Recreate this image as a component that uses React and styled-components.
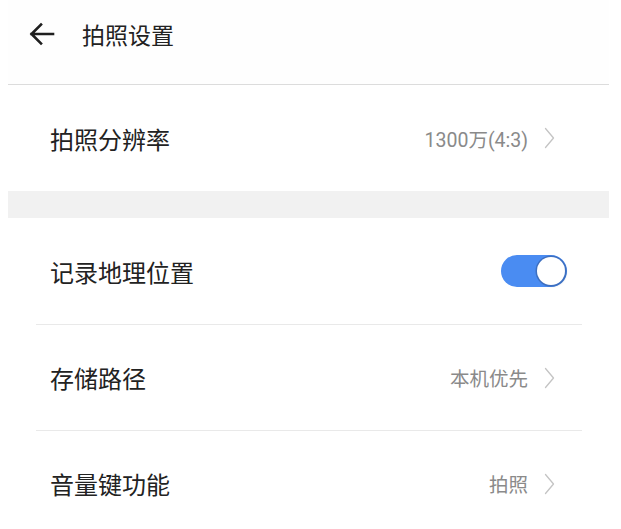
import React, { useState } from 'react';
import styled, { createGlobalStyle } from 'styled-components';

const GlobalStyle = createGlobalStyle`
  html, body {
    margin: 0;
    background: #fff;
  }
  body {
    padding: 0 12px 0 8px;
    font-family: "Noto Sans CJK SC", "Noto Sans", sans-serif;
    color: #222;
  }
`;

const Page = styled.div`
  width: 601px;
`;

const Header = styled.header`
  height: 85px;
  display: flex;
  align-items: flex-start;
  padding: 11px 0 0 17px;
  box-sizing: border-box;
  background: #fefefe;
  border-bottom: 1px solid #dcdcdc;
`;

const BackButton = styled.button`
  border: none;
  background: none;
  padding: 0;
  width: 34px;
  height: 46px;
  display: flex;
  align-items: center;
  justify-content: center;
  color: #1f1f1f;
  cursor: pointer;
`;

const Title = styled.h1`
  margin: 0 0 0 23px;
  font-size: 23px;
  line-height: 46px;
  font-weight: 400;
  color: #222;
`;

const Group = styled.section`
  padding: 0 27px 0 28px;
`;

const Row = styled.div`
  height: 106px;
  display: flex;
  align-items: center;
  padding: 0 ${p => (p.$toggle ? 15 : 27)}px 0 14px;
  box-sizing: border-box;
  border-top: ${p => (p.$divider ? '1px solid #e9e9e9' : 'none')};
  cursor: pointer;
`;

const Label = styled.span`
  flex: 1;
  font-size: 24px;
  color: #222;
`;

const Value = styled.span`
  font-family: Roboto, "Noto Sans CJK SC", sans-serif;
  font-size: 19.5px;
  color: #8a8a8a;
  margin-right: 16px;
`;

const Spacer = styled.div`
  height: 27px;
  background: #f1f1f1;
`;

const Track = styled.button`
  width: 66px;
  height: 32px;
  border: none;
  border-radius: 16px;
  padding: 2px;
  display: flex;
  justify-content: ${p => (p.$on ? 'flex-end' : 'flex-start')};
  background: ${p => (p.$on ? '#4a8cf2' : '#cfcfcf')};
  cursor: pointer;
`;

const Knob = styled.span`
  width: 28px;
  height: 28px;
  border-radius: 50%;
  background: #fff;
  box-shadow: 0 0 0 1.5px #3d6fc0, 1px 1px 2px rgba(0, 0, 0, 0.35);
`;

const Chevron = () => (
  <svg width="11" height="22" viewBox="0 0 11 22" fill="none">
    <path d="M1.5 1.5 L9.5 11 L1.5 20.5" stroke="#c4c4c4" strokeWidth="1.3" strokeLinecap="round" strokeLinejoin="round" />
  </svg>
);

const LinkRow = ({ label, value, divider }) => (
  <Row $divider={divider}>
    <Label>{label}</Label>
    <Value>{value}</Value>
    <Chevron />
  </Row>
);

export default function App() {
  const [geo, setGeo] = useState(true);

  return (
    <Page>
      <GlobalStyle />
      <Header>
        <BackButton aria-label="返回">
          <svg width="26" height="26" viewBox="0 0 26 26" fill="none">
            <path d="M24 13 H2.5 M12 3.5 L2.5 13 L12 22.5" stroke="currentColor" strokeWidth="2.6" strokeLinecap="square" />
          </svg>
        </BackButton>
        <Title>拍照设置</Title>
      </Header>

      <Group>
        <LinkRow label="拍照分辨率" value="1300万(4:3)" />
      </Group>

      <Spacer />

      <Group>
        <Row $toggle onClick={() => setGeo(!geo)}>
          <Label>记录地理位置</Label>
          <Track $on={geo} aria-pressed={geo}>
            <Knob />
          </Track>
        </Row>
        <LinkRow label="存储路径" value="本机优先" divider />
        <LinkRow label="音量键功能" value="拍照" divider />
      </Group>
    </Page>
  );
}
